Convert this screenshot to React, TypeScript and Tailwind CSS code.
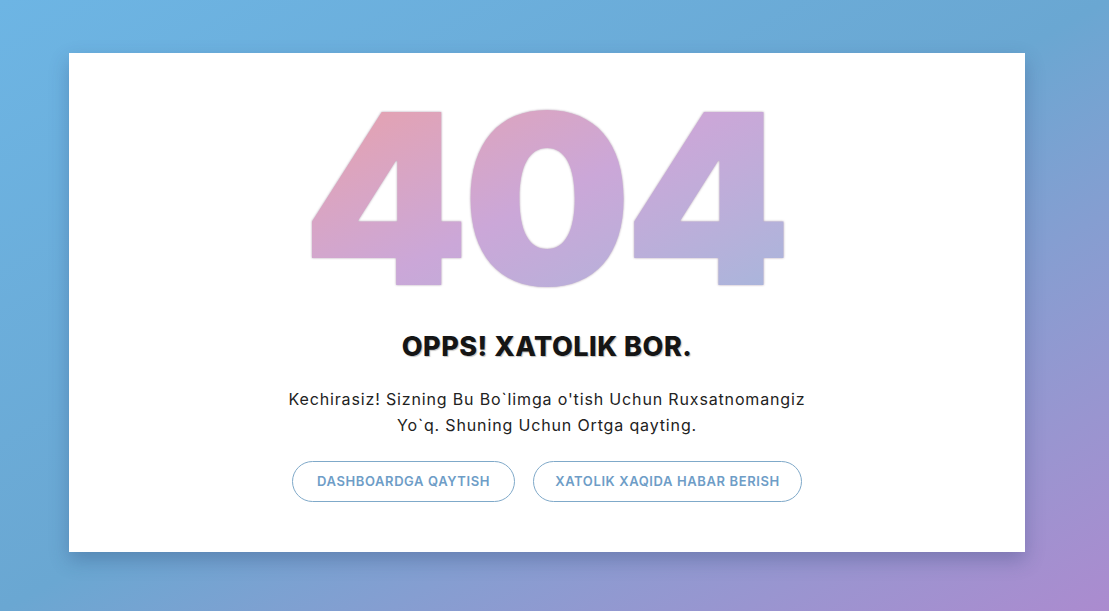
const NotFound = () => {
  return (
    <div
      className="min-h-screen w-full bg-gradient-to-br from-[#6db5e4] via-[#6aa7d2] to-[#ab8bcf] pl-[69px] pt-[53px] pb-[59px]"
      style={{ fontFamily: "Inter, 'Open Sans', sans-serif" }}
    >
      <div className="w-[956px] h-[499px] bg-white shadow-[0_8px_18px_rgba(40,60,110,0.3)] flex flex-col items-center pt-[26px]">
        <h1 className="pr-[7px] text-[238px] leading-[238px] font-black tracking-[-7px] bg-gradient-to-br from-[#eca0a4] via-[#cba7d8] to-[#a2b8dc] bg-clip-text text-transparent drop-shadow-[0_0_1px_rgba(80,40,80,0.45)] select-none">
          404
        </h1>
        <h2 className="mt-[14px] text-[27px] leading-8 font-extrabold text-[#151515] tracking-[0.5px] [text-shadow:1px_1px_1px_rgba(150,150,150,0.6)]">
          OPPS! XATOLIK BOR.
        </h2>
        <p className="mt-[23px] w-[528px] text-center text-[16px] leading-[26px] text-[#222] tracking-[0.85px]">
          Kechirasiz! Sizning Bu Bo`limga o'tish Uchun Ruxsatnomangiz Yo`q. Shuning Uchun Ortga qayting.
        </p>
        <div className="mt-[23px] flex gap-[18px]">
          <button className="h-[41px] w-[223px] rounded-full border border-[#7fa9c9] text-[#6e9dc7] text-[13px] font-semibold uppercase tracking-[0.6px]">
            Dashboardga qaytish
          </button>
          <button className="h-[41px] w-[269px] rounded-full border border-[#7fa9c9] text-[#6e9dc7] text-[13px] font-semibold uppercase tracking-[0.6px]">
            Xatolik xaqida habar berish
          </button>
        </div>
      </div>
    </div>
  );
};

export default function App() {
  return <NotFound />;
}
